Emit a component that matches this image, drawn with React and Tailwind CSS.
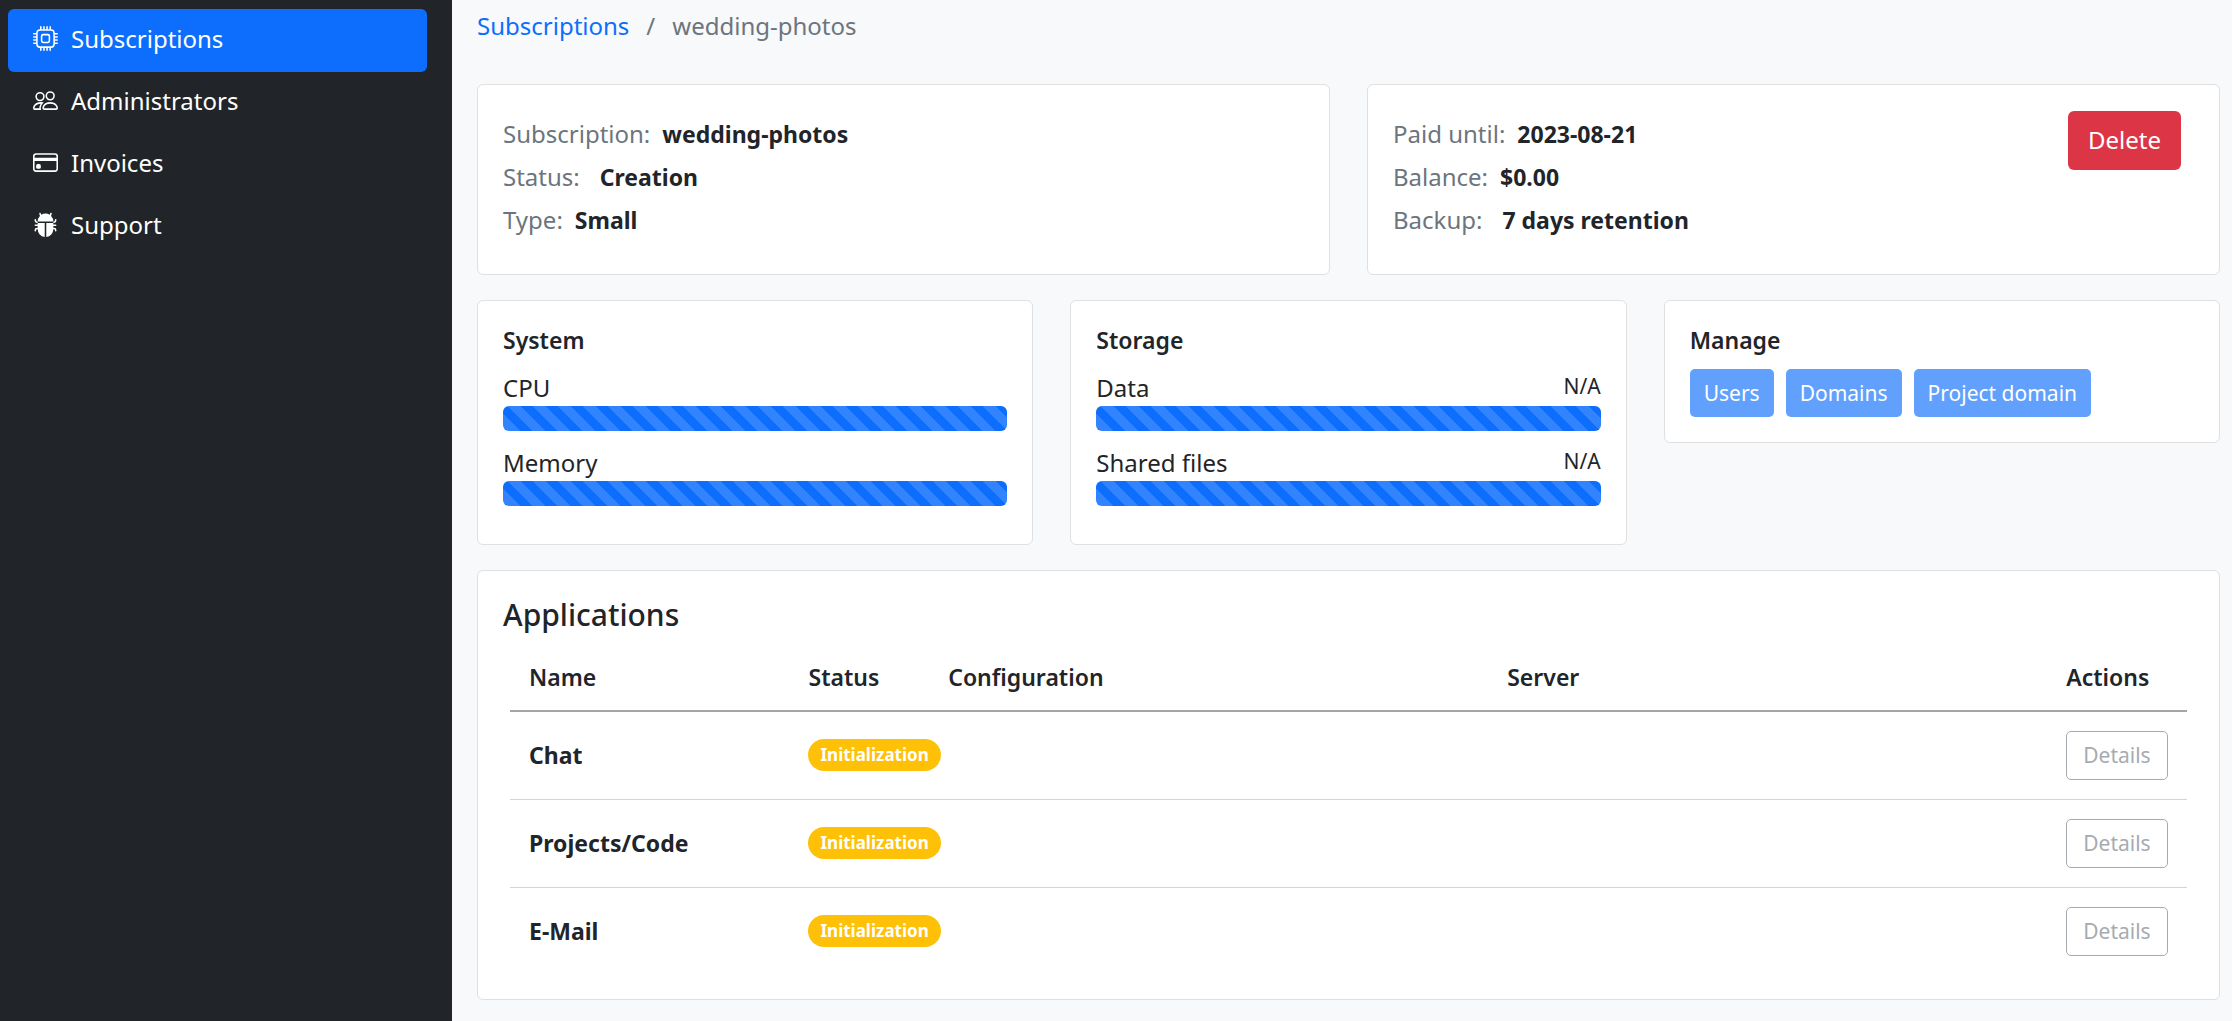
import { BsCpu, BsPeople, BsCreditCard, BsBugFill } from "react-icons/bs";

const navItems = [
  { label: "Subscriptions", Icon: BsCpu, active: true },
  { label: "Administrators", Icon: BsPeople },
  { label: "Invoices", Icon: BsCreditCard },
  { label: "Support", Icon: BsBugFill },
];

const columns = ["Name", "Status", "Configuration", "Server", "Actions"];

const apps = ["Chat", "Projects/Code", "E-Mail"];

function Card({ className = "", children }) {
  return (
    <section className={`rounded-md border border-[#dfe0e1] bg-white p-[25px] ${className}`}>
      {children}
    </section>
  );
}

function Fact({ label, gap = "gap-3", children }) {
  return (
    <div className={`flex h-[38px] items-center ${gap}`}>
      <dt className="text-[#6c757d]">{label}:</dt>
      <dd className="text-[23px] font-bold">{children}</dd>
    </div>
  );
}

function Meter({ label, value }) {
  return (
    <div className="mb-[13px]">
      <div className="flex h-[37px] items-center justify-between">
        <span>{label}</span>
        {value && <span className="pb-1 text-[21px]">{value}</span>}
      </div>
      <div
        role="progressbar"
        aria-label={label}
        className="h-[25px] rounded-md bg-[#0d6efd] bg-[linear-gradient(45deg,rgba(255,255,255,0.15)_25%,transparent_25%,transparent_50%,rgba(255,255,255,0.15)_50%,rgba(255,255,255,0.15)_75%,transparent_75%,transparent)] bg-[length:25px_25px] bg-[position:5px_0]"
      />
    </div>
  );
}

function CardTitle({ children }) {
  return <h2 className="mb-[15px] text-[23px] leading-[28px] font-semibold">{children}</h2>;
}

function ManageButton({ children }) {
  return (
    <button
      type="button"
      disabled
      className="h-12 rounded-[5px] bg-[#62a0fe] px-[14px] text-[21px] text-white"
    >
      {children}
    </button>
  );
}

export default function App() {
  return (
    <div className="flex min-h-screen bg-[#f8f9fa] font-['Noto_Sans',sans-serif] text-[24px] leading-[38px] text-[#212529]">
      <aside className="w-[452px] shrink-0 bg-[#212529] pt-[9px] pr-[25px] pl-2">
        <nav>
          <ul>
            {navItems.map(({ label, Icon, active }) => (
              <li key={label} className="h-[62px]">
                <a
                  href="#"
                  className={`flex h-[63px] items-center gap-[13px] rounded-md px-[25px] pb-1 text-white ${active ? "bg-[#0d6efd]" : ""}`}
                >
                  <Icon size={25} />
                  {label}
                </a>
              </li>
            ))}
          </ul>
        </nav>
      </aside>

      <main className="flex min-w-0 grow flex-col gap-[25px] pt-[7px] pr-3 pb-5 pl-[25px]">
        <nav aria-label="Breadcrumb" className="mb-[14px]">
          <ol className="flex gap-[17px]">
            <li>
              <a href="#" className="text-[#0d6efd]">Subscriptions</a>
            </li>
            <li aria-hidden="true" className="text-[#6c757d]">/</li>
            <li className="text-[#6c757d]">wedding-photos</li>
          </ol>
        </nav>

        <div className="grid grid-cols-2 gap-[37px]">
          <Card className="h-[191px]">
            <dl className="flex flex-col gap-[5px] pt-[5px]">
              <Fact label="Subscription">wedding-photos</Fact>
              <Fact label="Status" gap="gap-5">Creation</Fact>
              <Fact label="Type">Small</Fact>
            </dl>
          </Card>
          <Card className="flex h-[191px] items-center justify-between pr-[38px]">
            <dl className="flex flex-col gap-[5px] self-start pt-[5px]">
              <Fact label="Paid until">2023-08-21</Fact>
              <Fact label="Balance">$0.00</Fact>
              <Fact label="Backup" gap="gap-5">7 days retention</Fact>
            </dl>
            <button
              type="button"
              className="mt-px h-[59px] self-start rounded-md bg-[#dc3545] px-5 pb-[2px] text-white"
            >
              Delete
            </button>
          </Card>
        </div>

        <div className="grid grid-cols-3 items-start gap-[37px]">
          <Card>
            <CardTitle>System</CardTitle>
            <Meter label="CPU" />
            <Meter label="Memory" />
          </Card>
          <Card>
            <CardTitle>Storage</CardTitle>
            <Meter label="Data" value="N/A" />
            <Meter label="Shared files" value="N/A" />
          </Card>
          <Card>
            <CardTitle>Manage</CardTitle>
            <div className="flex gap-3">
              <ManageButton>Users</ManageButton>
              <ManageButton>Domains</ManageButton>
              <ManageButton>Project domain</ManageButton>
            </div>
          </Card>
        </div>

        <Card className="pb-6">
          <h2 className="text-[30px] font-medium">Applications</h2>
          <div className="px-[7px]">
            <table className="w-full table-fixed border-collapse text-left">
              <colgroup>
                <col className="w-2/12" />
                <col className="w-1/12" />
                <col className="w-4/12" />
                <col className="w-4/12" />
                <col className="w-1/12" />
              </colgroup>
              <thead>
                <tr className="h-[77px] border-b-2 border-[#a5a5a6] text-[23px]">
                  {columns.map((column) => (
                    <th key={column} scope="col" className="pt-[10px] pl-[19px] font-semibold">
                      {column}
                    </th>
                  ))}
                </tr>
              </thead>
              <tbody>
                {apps.map((name) => (
                  <tr key={name} className="h-[88px] border-b border-[#d3d4d5] last:border-0">
                    <th scope="row" className="pl-[19px] text-[23px] font-bold">{name}</th>
                    <td className="pl-[19px]">
                      <span className="flex h-8 w-max items-center rounded-full bg-[#ffc107] px-3 text-[17px] font-bold text-white">
                        Initialization
                      </span>
                    </td>
                    <td />
                    <td />
                    <td className="pl-[19px]">
                      <button
                        type="button"
                        disabled
                        className="flex h-[49px] items-center rounded-[5px] border border-[#a6abb0] px-4 text-[21px] text-[#a6abb0]"
                      >
                        Details
                      </button>
                    </td>
                  </tr>
                ))}
              </tbody>
            </table>
          </div>
        </Card>
      </main>
    </div>
  );
}
